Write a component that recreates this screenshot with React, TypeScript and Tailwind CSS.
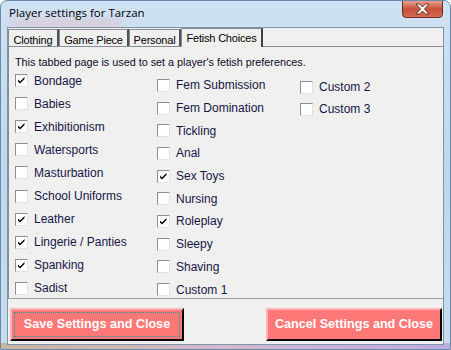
import React from 'react';

type Item = { label: string; checked?: boolean };

const col1: Item[] = [
  { label: 'Bondage', checked: true },
  { label: 'Babies' },
  { label: 'Exhibitionism', checked: true },
  { label: 'Watersports' },
  { label: 'Masturbation' },
  { label: 'School Uniforms' },
  { label: 'Leather', checked: true },
  { label: 'Lingerie / Panties', checked: true },
  { label: 'Spanking', checked: true },
  { label: 'Sadist' },
];

const col2: Item[] = [
  { label: 'Fem Submission' },
  { label: 'Fem Domination' },
  { label: 'Tickling' },
  { label: 'Anal' },
  { label: 'Sex Toys', checked: true },
  { label: 'Nursing' },
  { label: 'Roleplay', checked: true },
  { label: 'Sleepy' },
  { label: 'Shaving' },
  { label: 'Custom 1' },
];

const col3: Item[] = [{ label: 'Custom 2' }, { label: 'Custom 3' }];

function Check({ item, rowClass }: { item: Item; rowClass: string }) {
  return (
    <div className={`flex items-center gap-[6px] ${rowClass}`}>
      <span className="w-[13px] h-[13px] bg-white border border-[#8f8f8f] border-b-[#e2e2e2] border-r-[#e2e2e2] flex items-center justify-center shrink-0">
        {item.checked && (
          <svg width="9" height="9" viewBox="0 0 9 9">
            <path d="M1 3.5 L3 5.5 L7.5 1 V3 L3 7.5 L1 5.5 Z" fill="#000" />
          </svg>
        )}
      </span>
      <span className="text-[12px] leading-none text-[#161646] whitespace-nowrap">{item.label}</span>
    </div>
  );
}

// classic tab: flat grey face, light left/top, dark right edge
function Tab({ label, w, active }: { label: string; w: string; active?: boolean }) {
  if (active) {
    return (
      <div className={`${w} h-[19px] -mb-px z-10 bg-[#f0f0f0] border border-b-0 border-[#898c95] border-r-[#404040] border-r-2 flex items-start justify-center pt-[1px] text-[11px] tracking-[-0.2px] text-black`}>
        {label}
      </div>
    );
  }
  return (
    <div className={`${w} h-[17px] bg-[#f0f0f0] border border-b-0 border-[#898c95] border-r-[#505050] border-r-2 flex items-start justify-center pt-[2px] text-[11px] tracking-[-0.2px] text-black`}>
      {label}
    </div>
  );
}

export default function App() {
  return (
    <div
      className="w-[451px] h-[350px] relative overflow-hidden rounded-t-[7px] flex flex-col bg-gradient-to-b from-[#cfe2f3] via-[#bfd6ec] to-[#c9dcef] border border-[#6b8aa8]"
      style={{ fontFamily: '"Liberation Sans", Arial, sans-serif' }}
    >
      {/* faint blurred tint of what sits behind the glass */}
      <div className="absolute left-[10px] top-[18px] w-[110px] h-[10px] bg-[#e8b7c0] opacity-50 blur-[4px]" />
      <div className="absolute left-0 bottom-0 w-full h-[6px] bg-gradient-to-r from-[#c79a6a] via-[#d7a4b8] to-[#b48ad8] opacity-60" />

      {/* title bar */}
      <div className="h-[26px] shrink-0 flex items-start relative">
        <span
          className="pl-[8px] pt-[6px] text-[11.5px] leading-none text-black"
          style={{ fontFamily: '"Open Sans", "Noto Sans", sans-serif' }}
        >
          Player settings for Tarzan
        </span>
        <div className="absolute right-[7px] top-[-1px] w-[41px] h-[18px] rounded-b-[4px] border border-[#6d2a1e] bg-gradient-to-b from-[#e5a08f] via-[#c7503a] to-[#d46a55] flex items-center justify-center">
          <svg width="15" height="12" viewBox="0 0 15 12">
            <path d="M1 1 L4.5 1 L7.5 4 L10.5 1 L14 1 L9.5 6 L14 11 L10.5 11 L7.5 8 L4.5 11 L1 11 L5.5 6 Z" fill="#fff" stroke="#5a2a20" strokeWidth="0.9" />
          </svg>
        </div>
      </div>

      {/* client area */}
      <div className="mx-[6px] mb-[4px] flex-1 bg-[#f0f0f0] border border-[#7e93aa] flex flex-col relative z-10">
        <div className="h-[18px] flex items-end">
          <Tab label="Clothing" w="w-[51px]" />
          <Tab label="Game Piece" w="w-[70px]" />
          <Tab label="Personal" w="w-[52px]" />
          <Tab label="Fetish Choices" w="w-[82px]" active />
        </div>
        <div className="h-[253px] border-t border-l border-[#898c95] border-b border-b-[#a0a0a0] pt-[8px] pl-[6px]">
          <div className="text-[10.8px] leading-[14px] text-[#0a0a1e]">
            This tabbed page is used to set a player's fetish preferences.
          </div>
          <div className="flex">
            <div className="w-[142px] flex flex-col">
              {col1.map((it) => (
                <Check key={it.label} item={it} rowClass="h-[23.1px]" />
              ))}
            </div>
            <div className="w-[143px] flex flex-col mt-[5px]">
              {col2.map((it) => (
                <Check key={it.label} item={it} rowClass="h-[22.7px]" />
              ))}
            </div>
            <div className="flex flex-col mt-[7px]">
              {col3.map((it) => (
                <Check key={it.label} item={it} rowClass="h-[22px]" />
              ))}
            </div>
          </div>
        </div>
        <div className="flex justify-between items-start pt-[9px] pl-[2px] pr-[1px]">
          <button className="w-[174px] h-[33px] bg-[#ff7878] border-t-2 border-l-2 border-[#ffb3b3] border-r-2 border-b-2 border-r-black border-b-black p-[2px]">
            <div className="w-full h-full border border-dotted border-[#1a9a9a] flex items-center justify-center text-white font-bold text-[12.6px]">
              Save Settings and Close
            </div>
          </button>
          <button className="w-[176px] h-[33px] bg-[#ff7878] border-t-2 border-l-2 border-[#ffb3b3] border-r-2 border-b-2 border-r-black border-b-black flex items-center justify-center text-white font-bold text-[12.6px]">
            Cancel Settings and Close
          </button>
        </div>
      </div>
    </div>
  );
}
